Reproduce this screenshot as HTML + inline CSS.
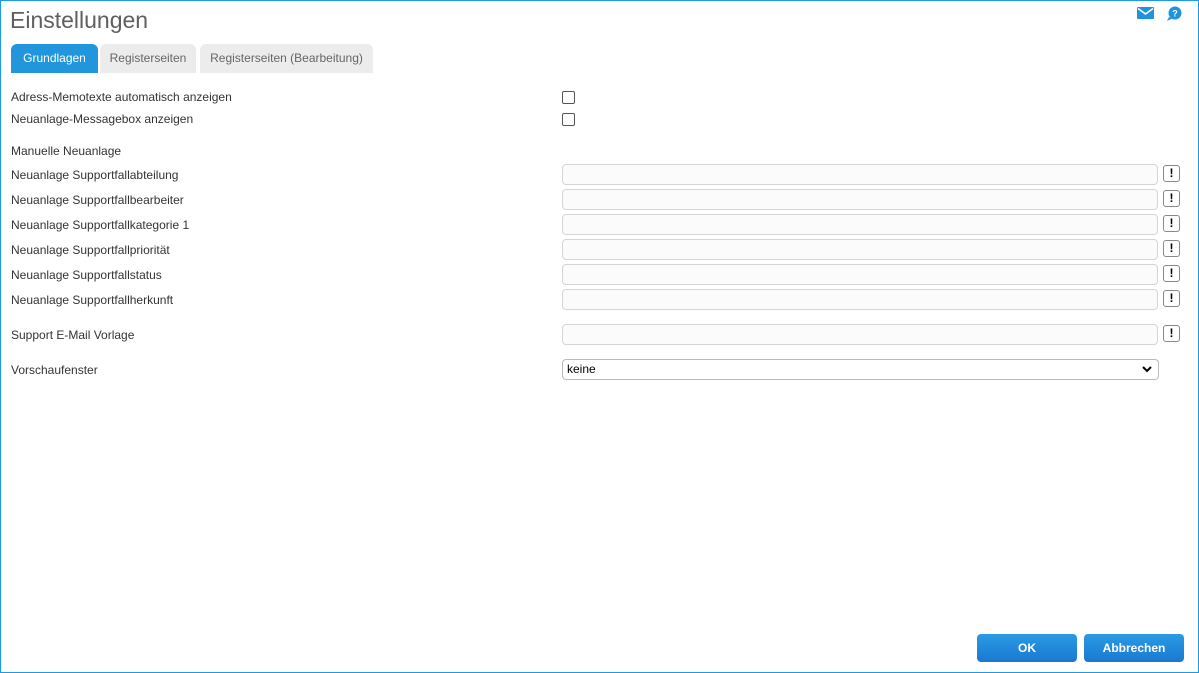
<!DOCTYPE html>
<html><head><meta charset="utf-8"><style>
*{box-sizing:border-box;margin:0;padding:0}
body{width:1199px;height:673px;position:relative;font-family:"Liberation Sans",Arial,sans-serif;background:#fff;overflow:hidden}
.frame{position:absolute;left:0;top:0;width:1199px;height:673px;border:1px solid #1a9be6}
.abs{position:absolute}
h1{position:absolute;left:10px;top:7px;font-size:23px;font-weight:normal;color:#5f5f5f}
.tab{position:absolute;top:44px;height:29px;border-radius:6px 6px 0 0;background:#ececec;color:#666;font-size:12px;line-height:29px;text-align:center}
.tab.on{background:#2196dc;color:#fff}
.lbl{position:absolute;left:11px;font-size:12px;color:#333}
.cb{position:absolute;left:562px;width:13px;height:13px;border:1px solid #555;border-radius:2px;background:#fff}
.in{position:absolute;left:562px;width:596px;height:21px;border:1px solid #d5d5d5;border-radius:4px;background:#fbfbfb}
.ex{position:absolute;left:1163px;width:17px;height:17px;border:1px solid #888;border-radius:3px;font-size:12px;font-weight:bold;text-align:center;line-height:15px;color:#000}
.btn{position:absolute;top:634px;height:28px;width:100px;border-radius:4px;background:linear-gradient(#2a9be2,#1a78d2);color:#fff;font-size:12px;font-weight:bold;text-align:center;line-height:28px}
</style></head><body>
<div class="frame"></div>
<h1>Einstellungen</h1>
<svg class="abs" style="left:1137px;top:7px" width="17" height="12" viewBox="0 0 17 12"><rect width="17" height="12" rx="1" fill="#1f93dd"/><path d="M1 1.5 L8.5 7 L16 1.5" stroke="#fff" stroke-width="1.6" fill="none"/></svg>
<svg class="abs" style="left:1166px;top:6px" width="17" height="15" viewBox="0 0 17 15"><circle cx="9" cy="7" r="6.5" fill="#1f93dd"/><path d="M3 11 L1 15 L6 12.5Z" fill="#1f93dd"/><text x="9" y="10.5" font-size="9" font-weight="bold" fill="#fff" text-anchor="middle" font-family="Liberation Sans">?</text></svg>
<div class="tab on" style="left:11px;width:87px">Grundlagen</div>
<div class="tab" style="left:100px;width:96px">Registerseiten</div>
<div class="tab" style="left:200px;width:173px">Registerseiten (Bearbeitung)</div>
<div class="lbl" style="top:90px">Adress-Memotexte automatisch anzeigen</div>
<div class="cb" style="top:91px"></div>
<div class="lbl" style="top:112px">Neuanlage-Messagebox anzeigen</div>
<div class="cb" style="top:113px"></div>
<div class="lbl" style="top:144px">Manuelle Neuanlage</div>
<div class="lbl" style="top:168px">Neuanlage Supportfallabteilung</div><div class="in" style="top:164px"></div><div class="ex" style="top:165px">!</div>
<div class="lbl" style="top:193px">Neuanlage Supportfallbearbeiter</div><div class="in" style="top:189px"></div><div class="ex" style="top:190px">!</div>
<div class="lbl" style="top:218px">Neuanlage Supportfallkategorie 1</div><div class="in" style="top:214px"></div><div class="ex" style="top:215px">!</div>
<div class="lbl" style="top:243px">Neuanlage Supportfallpriorität</div><div class="in" style="top:239px"></div><div class="ex" style="top:240px">!</div>
<div class="lbl" style="top:268px">Neuanlage Supportfallstatus</div><div class="in" style="top:264px"></div><div class="ex" style="top:265px">!</div>
<div class="lbl" style="top:293px">Neuanlage Supportfallherkunft</div><div class="in" style="top:289px"></div><div class="ex" style="top:290px">!</div>
<div class="lbl" style="top:328px">Support E-Mail Vorlage</div><div class="in" style="top:324px"></div><div class="ex" style="top:325px">!</div>
<div class="lbl" style="top:363px">Vorschaufenster</div>
<div class="in" style="top:359px;width:597px;background:#fff;border-color:#bbb;font-size:12px;padding-left:4px;line-height:19px;color:#000">keine
<svg class="abs" style="right:6px;top:6px" width="10" height="7" viewBox="0 0 10 7"><path d="M1 1 L5 5 L9 1" stroke="#000" stroke-width="2" fill="none"/></svg></div>
<div class="btn" style="left:977px">OK</div>
<div class="btn" style="left:1084px">Abbrechen</div>
</body></html>
